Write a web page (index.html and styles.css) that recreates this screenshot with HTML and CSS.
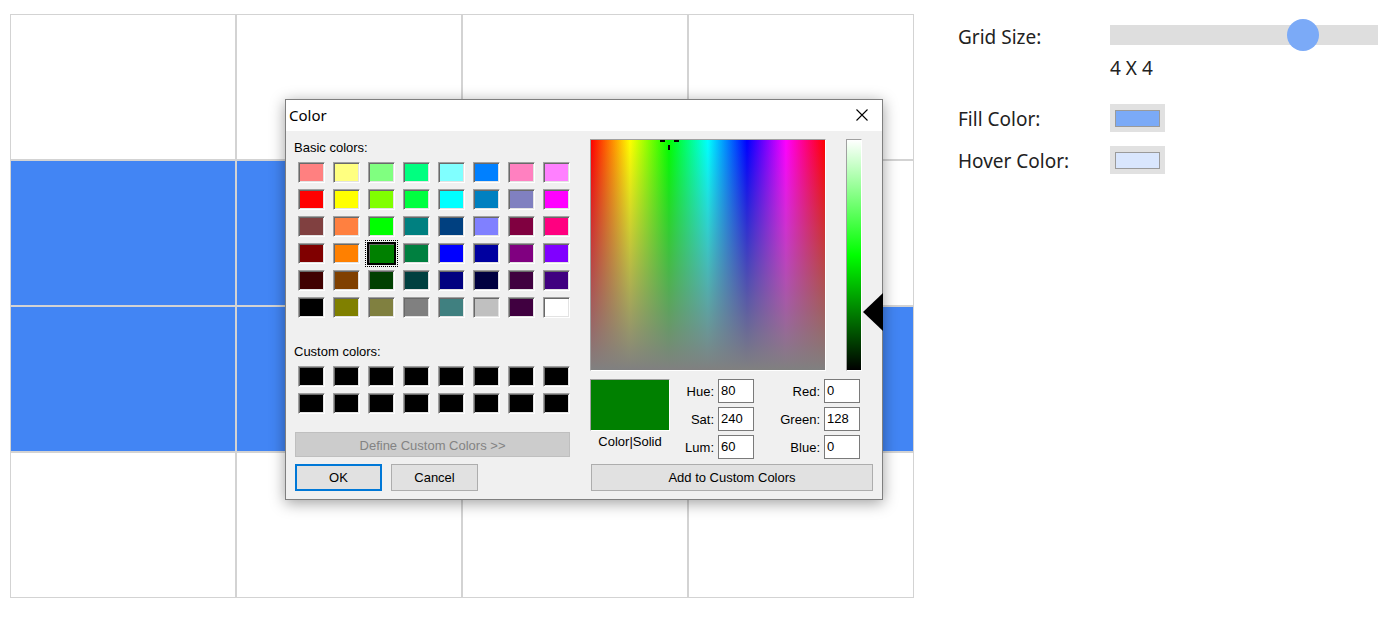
FILE: index.html
```html
<!DOCTYPE html>
<html>
<head>
<meta charset="utf-8">
<title>Grid</title>
<link rel="stylesheet" href="styles.css">
</head>
<body>
<div class="page">
  <div class="board">
    <div class="cell"></div><div class="cell"></div><div class="cell"></div><div class="cell"></div>
    <div class="cell on"></div><div class="cell on"></div><div class="cell on"></div><div class="cell"></div>
    <div class="cell on"></div><div class="cell on"></div><div class="cell on"></div><div class="cell on"></div>
    <div class="cell"></div><div class="cell"></div><div class="cell"></div><div class="cell"></div>
  </div>
  <div class="panel">
    <div class="prow slider-row">
      <label class="plabel">Grid Size:</label>
      <input class="slider" type="range" min="1" max="5" value="4">
    </div>
    <div class="size-value">4 X 4</div>
    <div class="prow color-row">
      <label class="plabel">Fill Color:</label>
      <div class="cbox"><div class="cinner fill"></div></div>
    </div>
    <div class="prow color-row">
      <label class="plabel">Hover Color:</label>
      <div class="cbox"><div class="cinner hover"></div></div>
    </div>
  </div>
</div>

<div class="dialog">
  <div class="titlebar">
    <span class="title">Color</span>
    <svg class="close" width="12" height="12" viewBox="0 0 12 12"><path d="M0.5 0.5 L11.5 11.5 M11.5 0.5 L0.5 11.5" stroke="#000" stroke-width="1.1" fill="none"/></svg>
  </div>
  <div class="dbody">
    <div class="leftcol">
      <div class="dlabel">Basic colors:</div>
      <div class="swatches basic">
        <div class="sw" style="background:#ff8080"></div><div class="sw" style="background:#ffff80"></div><div class="sw" style="background:#80ff80"></div><div class="sw" style="background:#00ff80"></div><div class="sw" style="background:#80ffff"></div><div class="sw" style="background:#0080ff"></div><div class="sw" style="background:#ff80c0"></div><div class="sw" style="background:#ff80ff"></div>
        <div class="sw" style="background:#ff0000"></div><div class="sw" style="background:#ffff00"></div><div class="sw" style="background:#80ff00"></div><div class="sw" style="background:#00ff40"></div><div class="sw" style="background:#00ffff"></div><div class="sw" style="background:#0080c0"></div><div class="sw" style="background:#8080c0"></div><div class="sw" style="background:#ff00ff"></div>
        <div class="sw" style="background:#804040"></div><div class="sw" style="background:#ff8040"></div><div class="sw" style="background:#00ff00"></div><div class="sw" style="background:#008080"></div><div class="sw" style="background:#004080"></div><div class="sw" style="background:#8080ff"></div><div class="sw" style="background:#800040"></div><div class="sw" style="background:#ff0080"></div>
        <div class="sw" style="background:#800000"></div><div class="sw" style="background:#ff8000"></div><div class="sw sel" style="background:#008000"></div><div class="sw" style="background:#008040"></div><div class="sw" style="background:#0000ff"></div><div class="sw" style="background:#0000a0"></div><div class="sw" style="background:#800080"></div><div class="sw" style="background:#8000ff"></div>
        <div class="sw" style="background:#400000"></div><div class="sw" style="background:#804000"></div><div class="sw" style="background:#004000"></div><div class="sw" style="background:#004040"></div><div class="sw" style="background:#000080"></div><div class="sw" style="background:#000040"></div><div class="sw" style="background:#400040"></div><div class="sw" style="background:#400080"></div>
        <div class="sw" style="background:#000000"></div><div class="sw" style="background:#808000"></div><div class="sw" style="background:#808040"></div><div class="sw" style="background:#808080"></div><div class="sw" style="background:#408080"></div><div class="sw" style="background:#c0c0c0"></div><div class="sw" style="background:#400040"></div><div class="sw" style="background:#ffffff"></div>
      </div>
      <div class="dlabel custom-label">Custom colors:</div>
      <div class="swatches custom">
        <div class="sw blk"></div><div class="sw blk"></div><div class="sw blk"></div><div class="sw blk"></div><div class="sw blk"></div><div class="sw blk"></div><div class="sw blk"></div><div class="sw blk"></div>
        <div class="sw blk"></div><div class="sw blk"></div><div class="sw blk"></div><div class="sw blk"></div><div class="sw blk"></div><div class="sw blk"></div><div class="sw blk"></div><div class="sw blk"></div>
      </div>
      <button class="btn define" disabled>Define Custom Colors &gt;&gt;</button>
      <div class="btnrow">
        <button class="btn ok">OK</button>
        <button class="btn cancel">Cancel</button>
      </div>
    </div>
    <div class="rightcol">
      <div class="pickrow">
        <div class="spectrum">
          <span class="ch ch-l"></span><span class="ch ch-r"></span><span class="ch ch-v"></span>
        </div>
        <div class="lumwrap">
          <div class="lum"></div>
          <div class="arrow"></div>
        </div>
      </div>
      <div class="fields">
        <div class="preview"></div>
        <div class="flabel">Hue:</div><div class="finput">80</div>
        <div class="flabel">Red:</div><div class="finput">0</div>
        <div class="flabel">Sat:</div><div class="finput">240</div>
        <div class="flabel">Green:</div><div class="finput">128</div>
        <div class="caption">Color|Solid</div>
        <div class="flabel">Lum:</div><div class="finput">60</div>
        <div class="flabel">Blue:</div><div class="finput">0</div>
      </div>
      <button class="btn add">Add to Custom Colors</button>
    </div>
  </div>
</div>
</body>
</html>
```

FILE: styles.css
```css
* { box-sizing: border-box; }
html, body { margin: 0; padding: 0; background: #fff; }
body {
  font-family: "Noto Sans", "Open Sans", sans-serif;
  color: #222;
  width: 1391px;
  height: 628px;
  overflow: hidden;
  position: relative;
}

.page {
  display: flex;
  align-items: flex-start;
  padding: 14px 0 0 10px;
  gap: 44px;
}

.board {
  display: grid;
  grid-template-columns: repeat(4, 226px);
  grid-template-rows: repeat(4, 146px);
}
.cell { border: 1px solid #d3d3d3; background: #fff; }
.cell.on { background: #4285f4; }

.panel {
  padding-top: 5px;
  display: flex;
  flex-direction: column;
}
.prow { display: flex; align-items: center; }
.plabel {
  width: 152px;
  font-size: 19px;
  line-height: 26px;
  color: #222;
}
.slider-row { height: 32px; }
.slider-row .plabel { position: relative; top: 2px; }
.slider {
  -webkit-appearance: none;
  appearance: none;
  width: 268px;
  height: 32px;
  margin: 0;
  padding: 0;
  background: transparent;
}
.slider::-webkit-slider-runnable-track {
  height: 20px;
  background: #dedede;
  border: none;
}
.slider::-webkit-slider-thumb {
  -webkit-appearance: none;
  appearance: none;
  width: 32px;
  height: 32px;
  border-radius: 50%;
  background: #7baaf7;
  border: none;
  margin-top: -6px;
}
.size-value {
  margin: 4px 0 0 152px;
  font-size: 19px;
  line-height: 26px;
}
.color-row { height: 28px; margin-top: 23px; }
.color-row + .color-row { margin-top: 14px; }
.color-row .plabel { position: relative; top: 1px; }
.cbox {
  width: 55px;
  height: 28px;
  background: #e1e1e1;
  padding: 6px 5px 5px 5px;
}
.cinner { width: 45px; height: 17px; border: 1px solid #9a9a9a; }
.cinner.fill { background: #7baaf7; }
.cinner.hover { background: #d9e6fd; }

/* Dialog */
.dialog {
  position: absolute;
  left: 285px;
  top: 99px;
  width: 598px;
  height: 401px;
  border: 1px solid #7f7f7f;
  background: #f0f0f0;
  box-shadow: 0 3px 14px rgba(0, 0, 0, 0.38);
  font-family: "Liberation Sans", Arial, sans-serif;
  font-size: 13px;
  color: #000;
}
.titlebar {
  height: 31px;
  background: #fff;
  display: flex;
  align-items: center;
  justify-content: space-between;
  padding: 0 14px 2px 3px;
}
.title {
  font-family: "Noto Sans", "Open Sans", sans-serif;
  font-size: 15px;
  color: #000;
  line-height: 20px;
}
.close { display: block; margin-top: 1px; }

.dbody {
  display: flex;
  padding: 8px 0 0 8px;
}
.leftcol { width: 276px; display: flex; flex-direction: column; }
.dlabel { line-height: 16px; height: 16px; padding-top: 1px; }
.custom-label { margin-top: 25px; }
.swatches {
  display: grid;
  grid-template-columns: repeat(8, 27px);
  grid-auto-rows: 21px;
  gap: 6px 8px;
  margin: 7px 0 0 4px;
}
.sw {
  border: 1px solid;
  border-color: #a0a0a0 #ffffff #ffffff #a0a0a0;
  box-shadow: inset 1px 1px 0 #696969, inset -1px -1px 0 #e3e3e3;
}
.sw.blk { background: #000; }
.sw.sel {
  border-color: #000;
  box-shadow: 0 0 0 1px #000, inset 1px 1px 0 #696969;
  outline: 1px dotted #000;
  outline-offset: 2px;
}

.btn {
  font-family: "Liberation Sans", Arial, sans-serif;
  font-size: 13px;
  color: #000;
  background: #e1e1e1;
  border: 1px solid #adadad;
  padding: 0;
  margin: 0;
  border-radius: 0;
}
.define {
  margin: 18px 0 0 1px;
  width: 275px;
  height: 25px;
  padding-top: 2px;
  background: #cccccc;
  border-color: #bfbfbf;
  color: #838383;
}
.btnrow { display: flex; gap: 9px; margin: 7px 0 0 1px; }
.ok, .cancel { width: 87px; height: 27px; }
.ok { border: 2px solid #0078d7; }

.rightcol { margin-left: 20px; display: flex; flex-direction: column; }
.pickrow { display: flex; align-items: flex-start; }
.spectrum {
  position: relative;
  width: 236px;
  height: 232px;
  border: 1px solid;
  border-color: #a0a0a0 #ffffff #ffffff #a0a0a0;
  background:
    linear-gradient(to bottom, rgba(128,128,128,0), #808080),
    linear-gradient(to right, #ff0000 0%, #ffff00 16.67%, #00ff00 33.33%, #00ffff 50%, #0000ff 66.67%, #ff00ff 83.33%, #ff0000 100%);
}
.ch { position: absolute; background: #000; }
.ch-l { left: 69px; top: 0; width: 5px; height: 2px; }
.ch-r { left: 83px; top: 0; width: 5px; height: 2px; }
.ch-v { left: 77px; top: 5px; width: 2px; height: 5px; }

.lumwrap { position: relative; margin-left: 20px; width: 36px; height: 232px; }
.lum {
  width: 16px;
  height: 232px;
  border: 1px solid;
  border-color: #a0a0a0 #ffffff #ffffff #a0a0a0;
  background: linear-gradient(to bottom, #ffffff 0%, #00ff00 50%, #000000 100%);
}
.arrow {
  position: absolute;
  left: 17px;
  top: 154px;
  width: 0;
  height: 0;
  border-top: 19px solid transparent;
  border-bottom: 19px solid transparent;
  border-right: 20px solid #000;
}

.fields {
  margin-top: 8px;
  display: grid;
  grid-template-columns: 80px 48px 36px 70px 36px;
  grid-template-rows: 24px 24px 24px;
  row-gap: 4px;
}
.preview {
  grid-row: 1 / span 2;
  grid-column: 1;
  background: #008000;
  border: 1px solid;
  border-color: #a0a0a0 #ffffff #ffffff #a0a0a0;
}
.caption {
  grid-column: 1;
  text-align: center;
  line-height: 14px;
  align-self: start;
}
.flabel {
  text-align: right;
  padding: 1px 4px 0 0;
  line-height: 24px;
}
.finput {
  background: #fff;
  border: 1px solid #7a7a7a;
  line-height: 22px;
  padding-left: 2px;
}
.add {
  margin: 5px 0 0 1px;
  width: 282px;
  height: 27px;
}
```
